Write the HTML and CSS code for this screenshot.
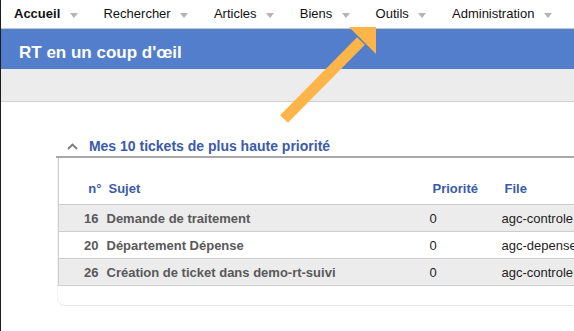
FILE: index.html
```html
<!DOCTYPE html>
<html>
<head>
<meta charset="UTF-8">
<title>RT en un coup d'œil</title>
<link rel="stylesheet" href="styles.css">
</head>
<body>
<div class="page">

  <div class="menu">
    <span class="menu-item current">Accueil <i class="drop"></i></span>
    <span class="menu-item">Rechercher <i class="drop"></i></span>
    <span class="menu-item">Articles <i class="drop"></i></span>
    <span class="menu-item">Biens <i class="drop"></i></span>
    <span class="menu-item">Outils <i class="drop"></i></span>
    <span class="menu-item">Administration <i class="drop"></i></span>
  </div>

  <div class="titlebar">RT en un coup d'œil</div>
  <div class="subbar"></div>

  <div class="dashboard">
    <div class="widget">
      <div class="widget-head">
        <svg class="toggle" width="11" height="7" viewBox="0 0 11 7">
          <polyline points="1,6 5.5,1.5 10,6" fill="none" stroke="#7a7a7a" stroke-width="1.8"/>
        </svg>
        Mes 10 tickets de plus haute priorité
      </div>
      <div class="widget-body">
        <table class="tickets">
          <colgroup>
            <col class="c-id"><col class="c-subject"><col class="c-prio"><col class="c-queue">
          </colgroup>
          <tr>
            <th class="id">n°</th>
            <th class="subject">Sujet</th>
            <th>Priorité</th>
            <th>File</th>
          </tr>
          <tr class="odd">
            <td class="id">16</td>
            <td class="subject">Demande de traitement</td>
            <td>0</td>
            <td>agc-controle</td>
          </tr>
          <tr>
            <td class="id">20</td>
            <td class="subject">Département Dépense</td>
            <td>0</td>
            <td>agc-depense</td>
          </tr>
          <tr class="odd">
            <td class="id">26</td>
            <td class="subject">Création de ticket dans demo-rt-suivi</td>
            <td>0</td>
            <td>agc-controle</td>
          </tr>
        </table>
      </div>
    </div>
  </div>

  <!-- pointer drawn over the page -->
  <svg class="pointer" width="574" height="331" viewBox="0 0 574 331">
    <line x1="284" y1="119" x2="361" y2="41" stroke="#fdb54a" stroke-width="11"/>
    <polygon points="349,27 376,27 376,54" fill="#fdb54a"/>
  </svg>

</div>
</body>
</html>
```

FILE: styles.css
```css
html, body {
  margin: 0;
  padding: 0;
  background: #fff;
  overflow: hidden;
}

body {
  font-family: "Liberation Sans", Arial, Helvetica, sans-serif;
  font-size: 13px;
  color: #1e1e1e;
}

.page {
  position: relative;
  border-left: 1px solid #1c1c1c;
  min-height: 331px;
}

.menu {
  height: 28px;
  line-height: 28px;
  border-bottom: 1px solid #c8c8c8;
  padding-left: 13px;
  white-space: nowrap;
}

.menu-item {
  display: inline-block;
  margin-right: 22px;
  color: #111;
}

.menu-item.current {
  font-weight: bold;
}

.drop {
  display: inline-block;
  width: 0;
  height: 0;
  margin-left: 6px;
  border-top: 5px solid #b4b4b4;
  border-left: 4.5px solid transparent;
  border-right: 4.5px solid transparent;
  vertical-align: 0;
}

.titlebar {
  height: 26px;
  padding: 14px 0 0 18px;
  background: #537ecb;
  color: #fff;
  font-size: 17px;
  font-weight: bold;
  line-height: 20px;
}

.subbar {
  height: 32px;
  background: #ececec;
  border-bottom: 1px solid #cfcfcf;
}

.dashboard {
  padding-top: 34px;
}

.widget {
  margin-left: 55px;
  width: 620px;
}

.widget-head {
  height: 20px;
  line-height: 20px;
  padding-left: 11px;
  border-bottom: 2px solid #a9a9a9;
  color: #3b5aa8;
  font-size: 14px;
  font-weight: bold;
}

.toggle {
  margin-right: 7px;
  vertical-align: 1px;
}

.widget-body {
  margin-left: 1px;
  padding-bottom: 19px;
  border-left: 1px solid #f1f1f1;
  border-bottom: 1px solid #e9e9e9;
  border-bottom-left-radius: 8px;
}

.tickets {
  border-collapse: collapse;
  table-layout: fixed;
  width: 590px;
  border-left: 1px solid #cdcdcd;
}

.c-id { width: 44px; }
.c-subject { width: 322px; }
.c-prio { width: 72px; }
.c-queue { width: 152px; }

.tickets th {
  padding: 23px 0 7px 8px;
  line-height: 16px;
  text-align: left;
  color: #3b5aa8;
  font-weight: bold;
}

.tickets th.id {
  text-align: right;
  padding-right: 1px;
}

.tickets th.subject {
  padding-left: 6px;
}

.tickets td {
  height: 24px;
  padding: 2px 0 0 5px;
  line-height: 24px;
  border-top: 1px solid #cdcdcd;
  border-bottom: 1px solid #cdcdcd;
  white-space: nowrap;
  overflow: hidden;
}

.tickets td.id {
  text-align: right;
  padding-right: 4px;
  font-weight: bold;
  color: #595959;
}

.tickets td.subject {
  padding-left: 4px;
  font-weight: bold;
  color: #595959;
}

.tickets tr.odd td {
  background: #ececec;
}

.pointer {
  position: absolute;
  left: -1px;
  top: 0;
  pointer-events: none;
}
```
